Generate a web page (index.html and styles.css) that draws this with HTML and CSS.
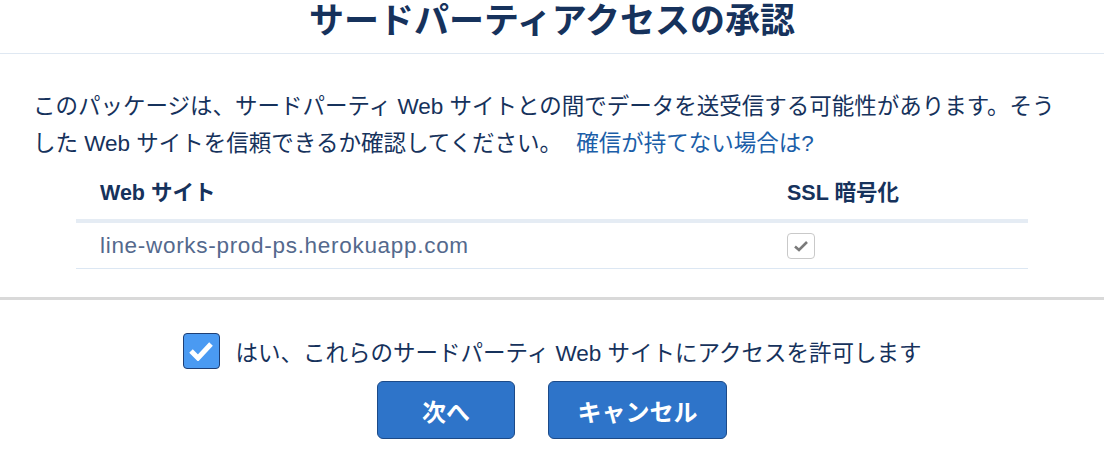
FILE: index.html
```html
<!DOCTYPE html>
<html lang="ja">
<head>
  <meta charset="UTF-8">
  <title>サードパーティアクセスの承認</title>
  <link rel="stylesheet" href="styles.css">
</head>
<body>

  <header class="dialog-head">
    <h1>サードパーティアクセスの承認</h1>
  </header>

  <section class="dialog-body">
    <p class="intro">このパッケージは、サードパーティ Web サイトとの間でデータを送受信する可能性があります。そうした Web サイトを信頼できるか確認してください。 <a href="#" class="help-link">確信が持てない場合は?</a></p>

    <div class="site-table">
      <div class="row head-row">
        <div class="cell first">Web サイト</div>
        <div class="cell">SSL 暗号化</div>
      </div>
      <div class="row data-row">
        <div class="cell first site">line-works-prod-ps.herokuapp.com</div>
        <div class="cell">
          <span class="ssl-box">
            <svg width="16" height="12" viewBox="0 0 16 12"><path d="M2 6.5 L6 10 L14 2" fill="none" stroke="#7a7a7a" stroke-width="2.6"/></svg>
          </span>
        </div>
      </div>
    </div>
  </section>

  <section class="dialog-foot">
    <label class="agree">
      <span class="agree-box">
        <svg width="26" height="20" viewBox="0 0 26 20"><path d="M3 10 L10 17 L23 3" fill="none" stroke="#fff" stroke-width="5"/></svg>
      </span>
      <span>はい、これらのサードパーティ Web サイトにアクセスを許可します</span>
    </label>

    <div class="buttons">
      <button class="btn btn-next">次へ</button>
      <button class="btn btn-cancel">キャンセル</button>
    </div>
  </section>

</body>
</html>
```

FILE: styles.css
```css
body {
  margin: 0;
  font-family: "Liberation Sans", "Noto Sans CJK JP", sans-serif;
  color: #16325c;
  background-color: #fff;
}

.dialog-head {
  height: 53px;
  border-bottom: 1px solid #dfe8f2;
  text-align: center;
}

.dialog-head h1 {
  margin: 0;
  font-size: 35px;
  line-height: 42px;
  font-weight: bold;
  color: #16325c;
}

.dialog-body {
  padding: 34px 33px 28px 33px;
  border-bottom: 3px solid #d9d9d9;
}

.intro {
  margin: 0;
  font-size: 22.5px;
  line-height: 37px;
}

.help-link {
  color: #1b5ea8;
  text-decoration: none;
  margin-left: 8px;
}

.site-table {
  margin: 0 43px;
}

.row {
  display: grid;
  grid-template-columns: 711px 1fr;
  align-items: center;
}

.cell.first {
  padding-left: 24px;
}

.head-row {
  padding: 18px 0 13px 0;
  border-bottom: 4px solid #e5ecf4;
  font-size: 21.5px;
  line-height: 26px;
  font-weight: bold;
}

.data-row {
  height: 45px;
  border-bottom: 1px solid #dce7f3;
  font-size: 22.5px;
}

.site {
  color: #54698d;
  letter-spacing: 0.7px;
}

.ssl-box {
  display: flex;
  align-items: center;
  justify-content: center;
  width: 26px;
  height: 24px;
  border: 1px solid #c9c9c9;
  border-radius: 4px;
  margin-top: 1px;
}

.dialog-foot {
  padding-top: 33px;
  display: flex;
  flex-direction: column;
  align-items: center;
}

.agree {
  display: flex;
  align-items: center;
  gap: 16px;
  font-size: 22.5px;
  height: 36px;
}

.agree-box {
  display: flex;
  align-items: center;
  justify-content: center;
  width: 35px;
  height: 34px;
  background-color: #4a9af2;
  border: 1px solid #1f3f74;
  border-radius: 4px;
}

.buttons {
  display: flex;
  gap: 33px;
  margin-top: 12px;
}

.btn {
  height: 58px;
  background-color: #2e74c9;
  color: #fff;
  border: 1px solid #1c4a88;
  border-radius: 6px;
  font-family: "Liberation Sans", "Noto Sans CJK JP", sans-serif;
  font-size: 24px;
  font-weight: bold;
  cursor: pointer;
}

.btn-next {
  width: 138px;
}

.btn-cancel {
  width: 179px;
}
```
